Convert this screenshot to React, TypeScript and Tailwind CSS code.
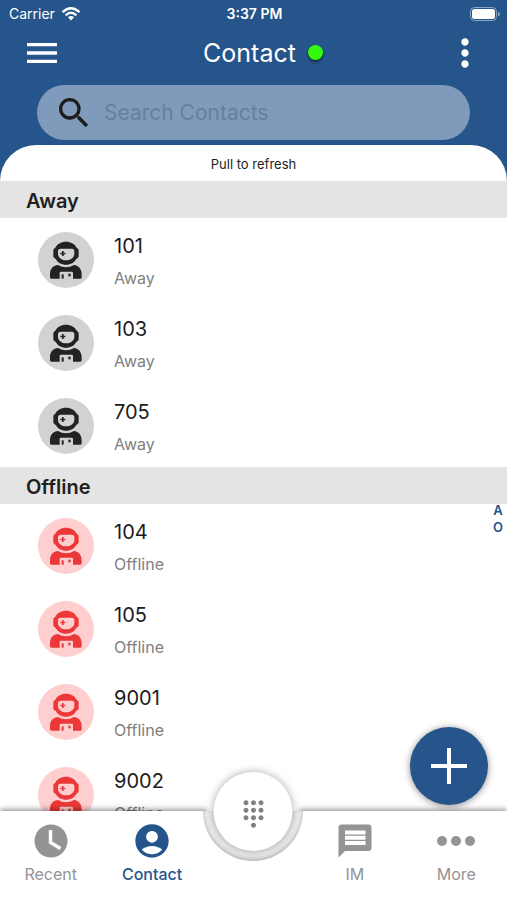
import type { ReactNode } from "react";
import {
  MdAccountCircle,
  MdDialpad,
  MdMenu,
  MdMoreVert,
  MdSearch,
} from "react-icons/md";

type Presence = "Away" | "Offline";

const sections: { presence: Presence; names: string[] }[] = [
  { presence: "Away", names: ["101", "103", "705"] },
  { presence: "Offline", names: ["104", "105", "9001", "9002"] },
];

const avatarColors: Record<Presence, string> = {
  Away: "bg-[#d2d2d2] text-[#222222]",
  Offline: "bg-[#ffcece] text-[#ec3838]",
};

function Astronaut() {
  return (
    <svg viewBox="0 0 168 168" className="size-14" fill="currentColor" aria-hidden="true">
      <path
        fillRule="evenodd"
        d="M84 29C99 29 111 36 116 47H117L122 53V74L117 80H115C110 91 98 98 84 98C70 98 58 91 53 80H51L46 74V53L51 47H52C57 36 69 29 84 29ZM68 50Q60 50 60 58V65C60 77 71 85 84 85C98 85 109 77 109 65V58Q109 50 101 50Z"
      />
      <path d="M72 57H77V62H82V67H77V72H72V67H67V62H72Z" />
      <path d="M40 140Q36 140 36 136V126C36 109 47 100 60 99Q71 106 84 106Q97 106 108 99C122 101 131 111 131 126V136Q131 140 127 140H105V123Q105 119 101 119H69Q65 119 65 123V140Z" />
      <rect x="71" y="127" width="6" height="13" />
      <rect x="91" y="125" width="7" height="8" />
    </svg>
  );
}

function ContactRow({ name, presence }: { name: string; presence: Presence }) {
  return (
    <li className="flex h-[83px] items-center gap-5 pl-[38px]">
      <span className={`shrink-0 rounded-full ${avatarColors[presence]}`}>
        <Astronaut />
      </span>
      <div className="pt-1">
        <p className="text-xl leading-8 text-[#1c1c1c]">{name}</p>
        <p className="text-base leading-8 text-[#808080]">{presence}</p>
      </div>
    </li>
  );
}

function Tab({ label, icon, active = false }: { label: string; icon: ReactNode; active?: boolean }) {
  return (
    <a
      href={`#${label.toLowerCase()}`}
      aria-current={active ? "page" : undefined}
      className={`flex flex-col items-center pt-2.5 text-base leading-[26px] ${
        active ? "font-medium text-[#25558b]" : "text-[#949494]"
      }`}
    >
      {icon}
      <span>{label}</span>
    </a>
  );
}

export default function App() {
  return (
    <div className="flex h-screen flex-col overflow-hidden bg-[#25558b] font-['Inter','Liberation_Sans',sans-serif]">
      <header className="text-white">
        <div className="grid h-7 grid-cols-3 items-center pr-[7px] pl-[9px] text-sm">
          <span className="flex items-center gap-1.5">
            Carrier
            <svg viewBox="0 0 20 14" className="h-3.5 w-5" fill="none" stroke="currentColor" strokeWidth="2.4" aria-hidden="true">
              <path d="M1.500 5.200Q10 -2.600 18.500 5.200M4.600 8.300Q10 3.400 15.400 8.300" />
              <path d="M7 10.200Q10 7.600 13 10.200L10 13.400Z" fill="currentColor" stroke="none" />
            </svg>
          </span>
          <span className="text-center font-semibold">3:37 PM</span>
          <svg viewBox="0 0 30 14" className="h-3.5 w-[30px] justify-self-end" aria-hidden="true">
            <rect x="0.5" y="0.5" width="26" height="13" rx="4" fill="none" stroke="#8ba6c5" />
            <rect x="2" y="2" width="23" height="10" rx="2.5" fill="#fff" />
            <path d="M28 4.500Q30 5.500 30 7T28 9.500Z" fill="#8ba6c5" />
          </svg>
        </div>
        <div className="flex h-[49px] items-center justify-between pr-5 pl-[22px]">
          <button type="button" aria-label="Menu">
            <MdMenu className="size-10" />
          </button>
          <div className="flex items-center gap-3 pl-[21px]">
            <h1 className="text-[25px] leading-8">Contact</h1>
            <span className="size-[15px] rounded-full bg-[#32fa08] shadow-[0_2px_3px_rgba(0,0,0,0.5)]" />
          </div>
          <button type="button" aria-label="More options">
            <MdMoreVert className="size-11" />
          </button>
        </div>
        <label className="mx-[37px] mt-2 mb-[5px] flex h-[55px] items-center gap-2.5 rounded-full bg-[#7f9aba] pl-[17px]">
          <MdSearch className="size-10 shrink-0 text-[#1c1c1c]" />
          <input
            type="search"
            aria-label="Search contacts"
            placeholder="Search Contacts"
            className="min-w-0 flex-1 bg-transparent text-[21px] text-[#1c1c1c] outline-none placeholder:text-[#6480a1]"
          />
        </label>
      </header>

      <main className="relative min-h-0 flex-1">
        <div className="h-full overflow-hidden rounded-t-[36px] bg-white">
          <p className="h-9 text-center text-[13px] leading-[38px] text-[#1c1c1c]">Pull to refresh</p>
          {sections.map(({ presence, names }) => (
            <section key={presence}>
              <h2 className="h-[37px] bg-[#e4e4e4] pl-[26px] text-xl leading-10 font-semibold text-[#1f1f1f]">
                {presence}
              </h2>
              <ul>
                {names.map((name) => (
                  <ContactRow key={name} name={name} presence={presence} />
                ))}
              </ul>
            </section>
          ))}
        </div>
        <nav
          aria-label="Jump to section"
          className="absolute top-[357px] right-1 flex flex-col text-center text-[13px] leading-[17px] font-semibold text-[#25558b]"
        >
          <a href="#away">A</a>
          <a href="#offline">O</a>
        </nav>
        <button
          type="button"
          aria-label="Add contact"
          className="absolute right-[19px] bottom-1.5 grid size-[78px] place-items-center rounded-full bg-[#25558b] text-white shadow-[0_1px_7px_rgba(0,0,0,0.45)]"
        >
          <svg viewBox="0 0 36 36" className="size-9" stroke="currentColor" strokeWidth="4" aria-hidden="true">
            <path d="M18 0V36M0 18H36" />
          </svg>
        </button>
      </main>

      <nav
        aria-label="Main"
        className="relative grid h-[89px] shrink-0 grid-cols-5 bg-white shadow-[0_-1px_6px_rgba(0,0,0,0.5)]"
      >
        <Tab
          label="Recent"
          icon={
            <svg viewBox="0 0 40 40" className="size-10" aria-hidden="true">
              <circle cx="20" cy="20" r="16.5" fill="currentColor" />
              <path d="M19.500 9V21.500L29.500 27.500" fill="none" stroke="#fff" strokeWidth="3.400" />
            </svg>
          }
        />
        <Tab label="Contact" icon={<MdAccountCircle className="size-10" />} active />
        <div className="relative">
          {/* Cradle cut into the bar, with the dial button resting in it */}
          <div className="absolute -top-2 left-1/2 h-2 w-[100px] -translate-x-1/2 bg-[linear-gradient(to_right,transparent,#ffffff_8%,#ffffff_92%,transparent)]" />
          <div className="absolute top-0 left-1/2 h-[50px] w-[100px] -translate-x-1/2 rounded-b-full bg-[#eeeeee] shadow-[inset_0_-2px_4px_rgba(0,0,0,0.25)]" />
          <button
            type="button"
            aria-label="Dial pad"
            className="absolute -top-[39px] left-1/2 grid size-[79px] -translate-x-1/2 place-items-center rounded-full bg-white text-[#808080] shadow-[0_0_8px_rgba(0,0,0,0.35)]"
          >
            <MdDialpad className="mt-1 size-[30px]" />
          </button>
        </div>
        <Tab
          label="IM"
          icon={
            <svg viewBox="0 0 40 40" className="size-10" aria-hidden="true">
              <path d="M6.500 3.500H33.500Q36.500 3.500 36.500 6.500V27Q36.500 30 33.500 30H10L3.500 36.500V6.500Q3.500 3.500 6.500 3.500Z" fill="currentColor" />
              <path d="M10 11.500H30.500M10 16.750H30.500M10 22H30.500" stroke="#fff" strokeWidth="3.800" />
            </svg>
          }
        />
        <Tab
          label="More"
          icon={
            <svg viewBox="0 0 40 40" className="size-10" fill="currentColor" aria-hidden="true">
              <circle cx="6" cy="20" r="5" />
              <circle cx="20" cy="20" r="5" />
              <circle cx="34" cy="20" r="5" />
            </svg>
          }
        />
      </nav>
    </div>
  );
}
